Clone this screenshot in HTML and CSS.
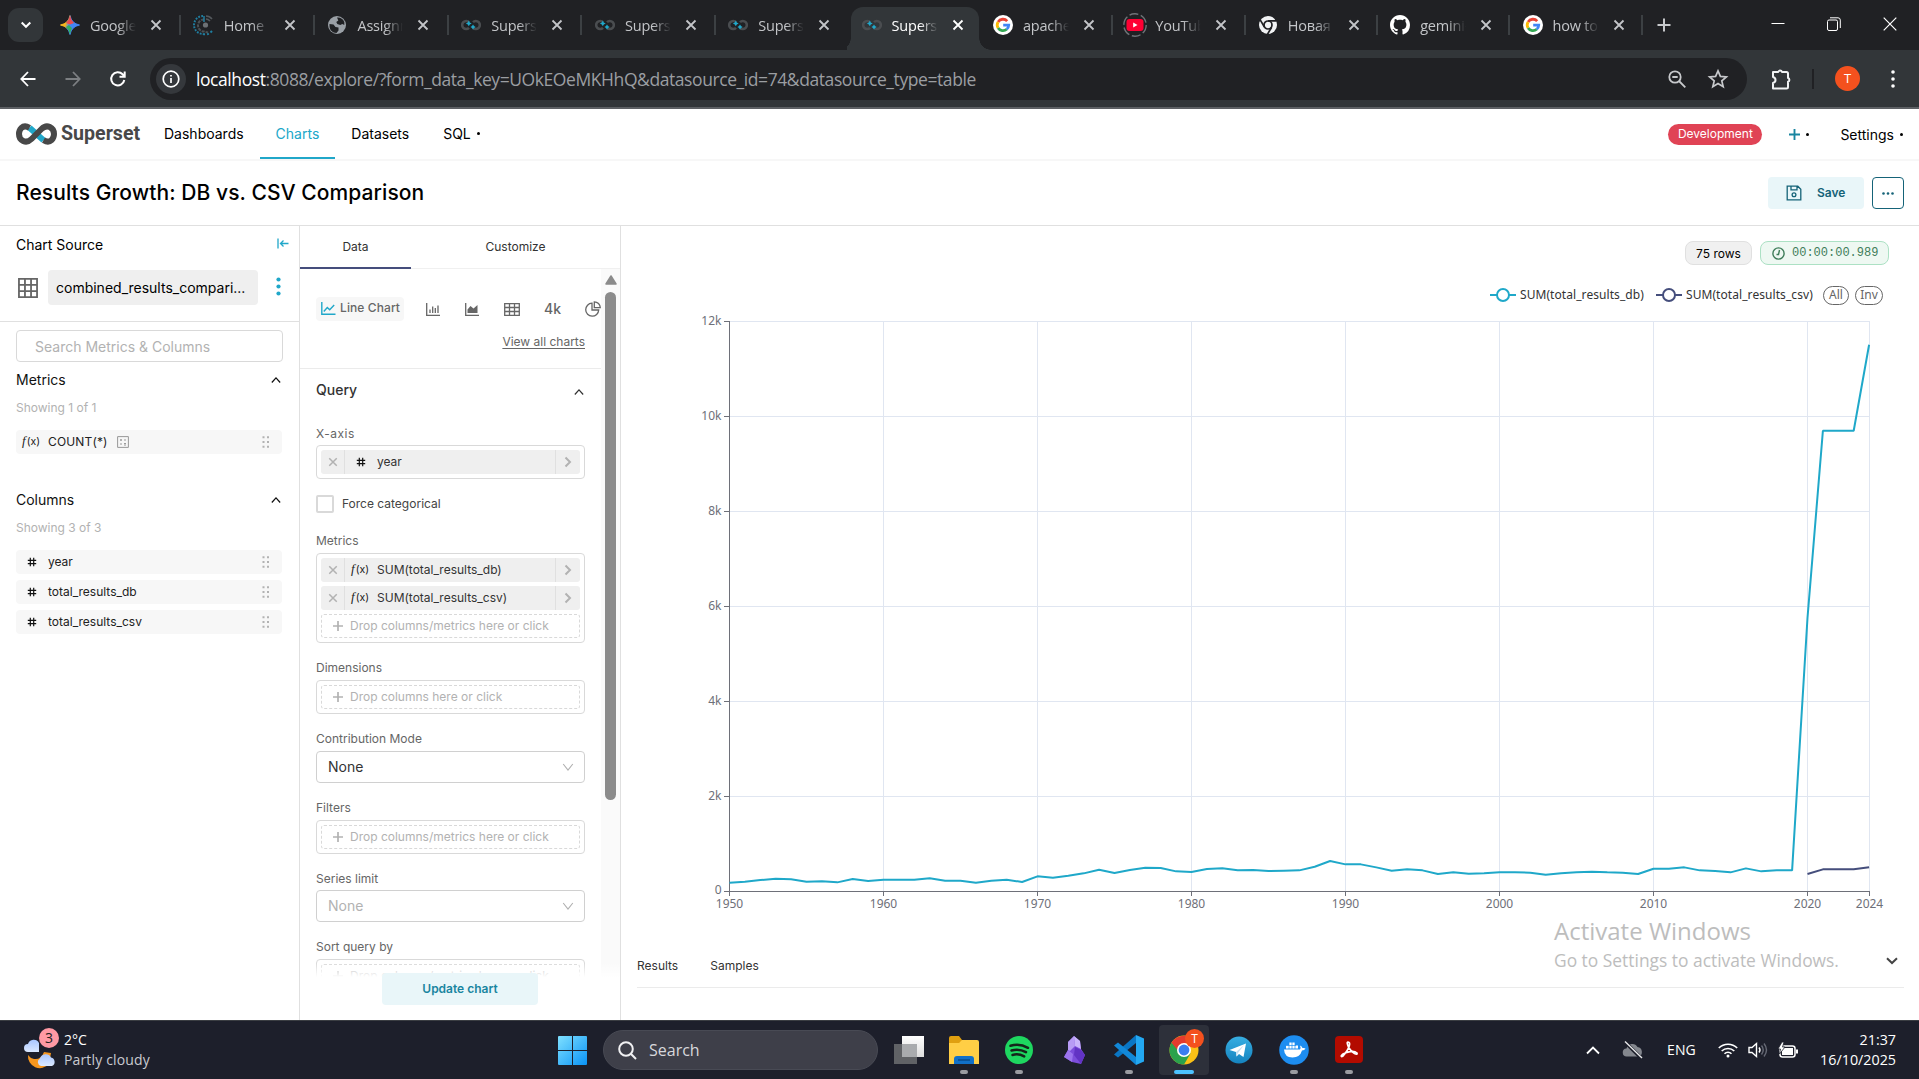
FILE: index.html
```html
<!DOCTYPE html>
<html lang="en">
<head>
<meta charset="utf-8">
<title>Results Growth: DB vs. CSV Comparison</title>
<link rel="stylesheet" href="styles.css">
</head>
<body>
<svg class="defs" width="0" height="0">
  <defs>
    <linearGradient id="gem" x1="0" x2="1" y1=".2" y2=".5"><stop stop-color="#f9b61b"/><stop offset=".3" stop-color="#f9b61b"/><stop offset=".5" stop-color="#4285f4"/><stop offset="1" stop-color="#4285f4"/></linearGradient>
    <symbol id="x" viewBox="0 0 12 12"><path d="M1.500 1.500l9 9M10.500 1.500l-9 9" fill="none" stroke="currentColor" stroke-width="1.800"/></symbol>
    <symbol id="superset-fav" viewBox="0 0 20 20"><path d="M8 7.200a4 4 0 1 0 0 5.600M12 7.200a4 4 0 1 1 0 5.600" fill="none" stroke="#4a4d50" stroke-width="2.600"/><path d="M7.800 5.500l1 1.900 1.900 1-1.900 1-1 1.900-1-1.900-1.900-1 1.900-1zM12 9.600l1 1.500 1.600 1-1.600 1-1 1.500-1-1.500-1.500-1 1.500-1z" fill="#20a7c9"/></symbol>
    <symbol id="google" viewBox="0 0 20 20"><circle cx="10" cy="10" r="10" fill="#fff"/><g fill="none" stroke-width="2.800"><path d="M14.200 6.100A5.700 5.700 0 0 0 5.100 7" stroke="#ea4335"/><path d="M5.100 7a5.700 5.700 0 0 0 0 6" stroke="#fbbc05"/><path d="M5.100 13a5.700 5.700 0 0 0 8.600 1.300" stroke="#34a853"/><path d="M13.700 14.300A5.700 5.700 0 0 0 15.700 10.200H10.200" stroke="#4285f4"/></g></symbol>
    <symbol id="up" viewBox="0 0 12 8"><path d="M1 7l5-5.500L11 7" fill="none" stroke="currentColor" stroke-width="1.500"/></symbol>
    <symbol id="down" viewBox="0 0 12 8"><path d="M1.200 1l4.800 6 4.800-6" fill="none" stroke="currentColor" stroke-width="1.100"/></symbol>
    <symbol id="right" viewBox="0 0 8 12"><path d="M1.500 1.500L6 6l-4.500 4.500" fill="none" stroke="currentColor" stroke-width="2"/></symbol>
    <symbol id="grip" viewBox="0 0 8 12"><path d="M.5.300h2v2h-2zM5 .300h2v2H5zM.5 5h2v2h-2zM5 5h2v2H5zM.5 9.700h2v2h-2zM5 9.700h2v2H5z" fill="#b2b2b2"/></symbol>
    <symbol id="hash" viewBox="0 0 10 10"><path d="M3.300.800v8.400M6.700.800v8.400M.8 3.300h8.400M.8 6.700h8.400" fill="none" stroke="#111" stroke-width="1.200"/></symbol>
    <symbol id="plus" viewBox="0 0 10 10"><path d="M5 0v10M0 5h10" fill="none" stroke="currentColor" stroke-width="1.700"/></symbol>
  </defs>
</svg>

<header class="browser">
  <div class="tabs">
    <button class="tab-menu"><svg width="12" height="8" viewBox="0 0 12 8"><path d="M1.700 1.500L6 5.800l4.300-4.300" fill="none" stroke="#fff" stroke-width="2"/></svg></button>
    <div class="tab wide"><svg class="fav" viewBox="0 0 20 20"><path d="M10 .5Q11.500 8.500 19.500 10 11.500 11.500 10 19.500 8.500 11.500.5 10 8.500 8.500 10 .5z" fill="url(#gem)" stroke="url(#gem)"/><path d="M10 .5Q11 5.500 14 8l-4 1.500L6 8Q9 5.500 10 .5z" fill="#ea4b4f"/><path d="M10 19.500Q9 14.500 6 12l3-2 3 3q-1.300 2.500-2 6.500z" fill="#2fae60"/></svg><span>Google</span><svg class="close"><use href="#x"/></svg></div>
    <div class="tab wide"><svg class="fav" viewBox="0 0 20 20" fill="none"><path d="M9 1A9 9 0 0 0 9 19" stroke="#1f7ea0" stroke-width="2" stroke-dasharray="1.800 1.300"/><path d="M9 19q5 1.500 9-3" stroke="#1f7ea0" stroke-width="2" stroke-dasharray="2 2"/><path d="M12 1q3.500 0 6 3M12 4q2 0 4 2" stroke="#54585c" stroke-width="1.600"/><path d="M10 4.500A6 6 0 0 0 10 16.500l4 1" stroke="#4b5155" stroke-width="2" stroke-dasharray="3 1"/><path d="M10 1v6" stroke="#1f7ea0" stroke-width="1.500"/><circle cx="11.500" cy="10" r="2.600" fill="#6d7175"/></svg><span>Home |</span><svg class="close"><use href="#x"/></svg></div>
    <div class="tab wide"><svg class="fav" viewBox="0 0 20 20"><circle cx="10" cy="10" r="9" fill="#9aa0a6"/><path d="M2.500 9l4 .5 2 2.500 3 .500v3l-2 2.500c-4 0-7-3-7-7zM10 2.500c3-.5 6 1 7.300 4.500v3l-2-1-2 1-3-1-1-2 2-1.500z" fill="#202124"/></svg><span>Assignm</span><svg class="close"><use href="#x"/></svg></div>
    <div class="tab wide"><svg class="fav"><use href="#superset-fav"/></svg><span>Superset</span><svg class="close"><use href="#x"/></svg></div>
    <div class="tab wide"><svg class="fav"><use href="#superset-fav"/></svg><span>Superset</span><svg class="close"><use href="#x"/></svg></div>
    <div class="tab plain"><svg class="fav"><use href="#superset-fav"/></svg><span>Superset</span><svg class="close"><use href="#x"/></svg></div>
    <div class="tab active"><svg class="fav"><use href="#superset-fav"/></svg><span>Superset</span><svg class="close"><use href="#x"/></svg></div>
    <div class="tab"><svg class="fav"><use href="#google"/></svg><span>apache</span><svg class="close"><use href="#x"/></svg></div>
    <div class="tab"><svg class="fav big" viewBox="0 0 24 24"><circle cx="12" cy="12" r="11.200" fill="none" stroke="#6f7378" stroke-width="1.400" stroke-dasharray="9 2.700"/><rect x="3.500" y="6" width="17" height="12" rx="3" fill="#ff0033"/><path d="M10.200 9.500v5l4.300-2.500z" fill="#fff"/></svg><span>YouTube</span><svg class="close"><use href="#x"/></svg></div>
    <div class="tab"><svg class="fav" viewBox="0 0 20 20"><circle cx="10" cy="10" r="9" fill="#f1f3f4"/><circle cx="10" cy="10" r="4" fill="#f1f3f4" stroke="#202124" stroke-width="1.700"/><path d="M10 5.800h8.500M6.400 12L2.200 4.900M13.600 12.200L9.400 19.400" stroke="#202124" stroke-width="1.700"/></svg><span>Новая</span><svg class="close"><use href="#x"/></svg></div>
    <div class="tab"><svg class="fav" viewBox="0 0 16 16"><path fill="#fff" d="M8 0C3.580 0 0 3.580 0 8c0 3.540 2.290 6.530 5.470 7.590.4.070.55-.17.55-.38 0-.19-.01-.82-.01-1.490-2.010.37-2.530-.49-2.690-.94-.09-.23-.48-.94-.82-1.130-.28-.15-.68-.52-.01-.53.63-.01 1.080.58 1.230.82.72 1.210 1.870.87 2.330.66.07-.52.28-.87.510-1.070-1.780-.2-3.640-.89-3.640-3.950 0-.87.310-1.590.82-2.150-.08-.2-.36-1.020.08-2.120 0 0 .67-.21 2.200.82.640-.18 1.320-.27 2-.27s1.360.090 2 .27c1.530-1.040 2.200-.82 2.200-.82.440 1.100.16 1.920.08 2.120.51.56.82 1.270.82 2.150 0 3.070-1.870 3.750-3.650 3.950.29.25.54.73.54 1.480 0 1.070-.01 1.930-.01 2.200 0 .21.150.46.550.38A8.010 8.010 0 0 0 16 8c0-4.420-3.580-8-8-8z"/></svg><span>gemini-</span><svg class="close"><use href="#x"/></svg></div>
    <div class="tab"><svg class="fav"><use href="#google"/></svg><span>how to</span><svg class="close"><use href="#x"/></svg></div>
    <svg class="new-tab" width="14" height="14" viewBox="0 0 14 14"><path d="M7 .5v13M.5 7h13" stroke="#c7c9cc" stroke-width="2"/></svg>
    <div class="window-controls">
      <svg width="14" height="14" viewBox="0 0 14 14"><path d="M.5 6.500h13" stroke="#fff"/></svg>
      <svg width="14" height="14" viewBox="0 0 14 14" fill="none" stroke="#fff"><rect x=".5" y="3" width="10" height="10.500" rx="1.500"/><path d="M3 .800h8a2.300 2.300 0 0 1 2.300 2.300V11" /></svg>
      <svg width="14" height="14" viewBox="0 0 14 14"><path d="M.7.700l12.600 12.600M13.300.700L.7 13.300" stroke="#fff" stroke-width="1.200"/></svg>
    </div>
  </div>
  <div class="toolbar">
    <div class="nav-buttons">
      <svg width="16" height="16" viewBox="0 0 16 16" stroke="#fff"><path d="M15.500 8H1.500M8 1L1.300 8 8 15" fill="none" stroke-width="1.800"/></svg>
      <svg width="16" height="16" viewBox="0 0 16 16" stroke="#7c7f82"><path d="M.5 8h14M8 1l6.700 7L8 15" fill="none" stroke-width="1.800"/></svg>
      <svg width="16" height="16" viewBox="0 0 16 16" stroke="#fff"><path d="M14.300 9A6.600 6.600 0 1 1 12.600 3.300L14.500 5.200M14.700.500v5.300H9.500" fill="none" stroke-width="2"/></svg>
    </div>
    <div class="omnibox">
      <i class="info"><svg width="18" height="18" viewBox="0 0 18 18"><circle cx="9" cy="9" r="7.800" fill="none" stroke="#fff" stroke-width="1.700"/><path d="M9 8v5M9 5v1.600" stroke="#fff" stroke-width="1.700"/></svg></i>
      <span class="url"><b>localhost</b>:8088/explore/?form_data_key=UOkEOeMKHhQ&amp;datasource_id=74&amp;datasource_type=table</span>
      <svg class="zoom" width="18" height="18" viewBox="0 0 18 18" fill="none" stroke="#c7c9cc" stroke-width="1.800"><circle cx="7" cy="7" r="5.700"/><path d="M11 11l6.300 6.300M4.300 7h5.400"/></svg>
      <svg class="star" width="20" height="20" viewBox="0 0 20 20" fill="none" stroke="#c7c9cc" stroke-width="1.700"><path d="M10 1.800l2.400 5.600 6 .5-4.600 4 1.400 5.900L10 14.600l-5.200 3.200 1.400-5.900-4.600-4 6-.5z"/></svg>
    </div>
    <svg class="puzzle" width="22" height="22" viewBox="0 0 22 22"><path d="M3 4h5.200a2 2 0 0 1 3.800 0h4.500q1.500 0 1.500 1.500V10a2 2 0 0 1 0 3.800V19q0 1.500-1.500 1.500H3V15q2.500-.7 2.500-3T3 9z" fill="none" stroke="#f1f3f4" stroke-width="2" stroke-linejoin="round"/></svg>
    <i class="bar-sep"></i>
    <span class="avatar">T</span>
    <svg class="kebab" width="4" height="18" viewBox="0 0 4 18" fill="#fff"><circle cx="2" cy="2" r="1.800"/><circle cx="2" cy="9" r="1.800"/><circle cx="2" cy="16" r="1.800"/></svg>
  </div>
</header>

<nav class="topnav">
  <a class="logo"><svg width="41" height="22" viewBox="0 0 41 22" fill="none" stroke-width="6"><path d="M13.500 4.700L27.500 17.300" stroke="#20a7c9"/><path d="M13.500 4.800C6 .500 3 7.500 3 11c0 6.500 7 10.500 12.500 5L25.500 6C31 .500 38 4.500 38 11c0 3.500-3 10.500-10.500 6.200" stroke="#484848"/></svg><b>Superset</b></a>
  <a>Dashboards</a><a class="on">Charts</a><a>Datasets</a><a class="sql">SQL<i></i></a>
  <div class="nav-right"><span class="env">Development</span><svg class="add" width="11" height="11"><use href="#plus"/></svg><i></i><span class="settings">Settings</span><i></i></div>
</nav>

<section class="titlebar">
  <h1>Results Growth: DB vs. CSV Comparison</h1>
  <button class="save"><svg width="16" height="16" viewBox="0 0 16 16" fill="none" stroke="#156378" stroke-width="1.300"><path d="M1.200 1.200h10.600l3 3v10.600H1.200zM5 1.500v3.300h6V1.500"/><circle cx="8" cy="9.700" r="1.900"/></svg>Save</button>
  <button class="more"><svg width="12" height="3" viewBox="0 0 12 3" fill="#156378"><circle cx="1.500" cy="1.500" r="1.300"/><circle cx="6" cy="1.500" r="1.300"/><circle cx="10.500" cy="1.500" r="1.300"/></svg></button>
</section>

<main class="explore">
  <aside class="source">
    <div class="source-head"><span>Chart Source</span><svg width="12" height="12" viewBox="0 0 12 12" fill="none" stroke="#20a7c9" stroke-width="1.300"><path d="M1 .500v10M3.500 5.500H11.500M6.500 2.500l-3 3 3 3"/></svg></div>
    <div class="dataset">
      <svg width="20" height="20" viewBox="0 0 21 21" fill="none" stroke="#666" stroke-width="1.900"><path d="M1 1h19v19H1zM1 7.300h19M1 13.700h19M7.300 1v19M13.700 1v19"/></svg>
      <span>combined_results_compari...</span>
      <svg width="5" height="19" viewBox="0 0 5 19" fill="#20a7c9"><circle cx="2.500" cy="2.500" r="2.100"/><circle cx="2.500" cy="9.500" r="2.100"/><circle cx="2.500" cy="16.500" r="2.100"/></svg>
    </div>
    <div class="search">Search Metrics &amp; Columns</div>
    <div class="group-head">Metrics<svg><use href="#up"/></svg></div>
    <p class="showing">Showing 1 of 1</p>
    <div class="field"><em class="fx"><i>f</i>(x)</em><span class="wide-text">COUNT(*)</span><svg class="cert" width="12" height="12" viewBox="0 0 12 12" fill="none" stroke="#999"><path d="M.6.600h10.800v10.800H.6z"/><path d="M3 4h2M4 3v2M7 4h2M3 8h2M7 7.500h2M7 9h2" /></svg><svg class="grip"><use href="#grip"/></svg></div>
    <div class="group-head second">Columns<svg><use href="#up"/></svg></div>
    <p class="showing">Showing 3 of 3</p>
    <div class="field"><svg class="hash"><use href="#hash"/></svg><span>year</span><svg class="grip"><use href="#grip"/></svg></div>
    <div class="field"><svg class="hash"><use href="#hash"/></svg><span>total_results_db</span><svg class="grip"><use href="#grip"/></svg></div>
    <div class="field"><svg class="hash"><use href="#hash"/></svg><span>total_results_csv</span><svg class="grip"><use href="#grip"/></svg></div>
  </aside>

  <section class="controls">
    <div class="ctabs"><span class="on">Data</span><span>Customize</span></div>
    <div class="cbody">
      <div class="cscroll">
        <div class="viz">
          <div class="viz-row">
            <span class="current"><svg width="15" height="13" viewBox="0 0 15 13" fill="none" stroke="#20a7c9" stroke-width="1.400"><path d="M.8 0v12.200H14.500M2.800 9.500l3.500-4 2.400 2.200L13.200 3"/></svg>Line Chart</span>
            <svg width="14" height="13" viewBox="0 0 14 13" fill="none" stroke="#666" stroke-width="1.300"><path d="M.7 0v12.300H14M4 10V6.500M6.700 10V3.500M9.300 10V5M12 10V2.500"/></svg>
            <svg width="14" height="13" viewBox="0 0 14 13"><path d="M.7 0v12.300H14" fill="none" stroke="#666" stroke-width="1.300"/><path d="M2.500 10V6.500L5.500 3l3 2.500L12.500 2v8z" fill="#666"/></svg>
            <svg width="16" height="13" viewBox="0 0 16 13" fill="none" stroke="#666" stroke-width="1.300"><path d="M.7.700h14.600v11.600H.7zM.7 4.500h14.600M.7 8.500h14.600M5.500.700v11.600M10.500.700v11.600"/></svg>
            <b>4k</b>
            <svg class="pie" width="16" height="16" viewBox="0 0 16 16" fill="none" stroke="#666" stroke-width="1.300"><path d="M7 2.200A6.500 6.500 0 1 0 13.700 9H7z"/><path d="M9.300.800V6.700h6A6 6 0 0 0 9.300.800z"/></svg>
          </div>
          <a>View all charts</a>
        </div>
        <div class="query-head">Query<svg><use href="#up"/></svg></div>
        <label class="tight xaxis">X-axis</label>
        <div class="box"><div class="pill"><svg class="rm"><use href="#x"/></svg><svg class="hash"><use href="#hash"/></svg><span>year</span><svg class="go"><use href="#right"/></svg></div></div>
        <div class="check"><i></i>Force categorical</div>
        <label>Metrics</label>
        <div class="box">
          <div class="pill"><svg class="rm"><use href="#x"/></svg><em class="fx"><i>f</i>(x)</em><span>SUM(total_results_db)</span><svg class="go"><use href="#right"/></svg></div>
          <div class="pill"><svg class="rm"><use href="#x"/></svg><em class="fx"><i>f</i>(x)</em><span>SUM(total_results_csv)</span><svg class="go"><use href="#right"/></svg></div>
          <div class="drop"><svg><use href="#plus"/></svg>Drop columns/metrics here or click</div>
        </div>
        <label>Dimensions</label>
        <div class="box"><div class="drop"><svg><use href="#plus"/></svg>Drop columns here or click</div></div>
        <label>Contribution Mode</label>
        <div class="select">None<svg><use href="#down"/></svg></div>
        <label>Filters</label>
        <div class="box"><div class="drop"><svg><use href="#plus"/></svg>Drop columns/metrics here or click</div></div>
        <label class="tight">Series limit</label>
        <div class="select empty">None<svg><use href="#down"/></svg></div>
        <label>Sort query by</label>
        <div class="box"><div class="drop"><svg><use href="#plus"/></svg>Drop columns/metrics here or click</div></div>
      </div>
      <div class="scrollbar"><svg width="12" height="10" viewBox="0 0 12 10"><path d="M6 1l5 8H1z" fill="#8b8b8b" stroke="#8b8b8b" stroke-width="1.500" stroke-linejoin="round"/></svg><i></i></div>
    </div>
    <div class="update"><button>Update chart</button></div>
  </section>

  <section class="chart">
    <div class="stats"><span class="rows">75 rows</span><span class="timer"><svg width="13" height="13" viewBox="0 0 13 13" fill="none" stroke="#3f7d5a" stroke-width="1.400"><circle cx="6.500" cy="6.500" r="5.600"/><path d="M7.500 3L6.500 7.500 4.500 7.500"/></svg>00:00:00.989</span></div>
    <div class="legend">
      <svg width="26" height="14" viewBox="0 0 26 14" stroke="#1fa8c9" stroke-width="2"><path d="M0 7h26"/><circle cx="13" cy="7" r="6" fill="#fff"/></svg><span class="l1">SUM(total_results_db)</span>
      <svg width="26" height="14" viewBox="0 0 26 14" stroke="#454e7c" stroke-width="2"><path d="M0 7h26"/><circle cx="13" cy="7" r="6" fill="#fff"/></svg><span class="l2">SUM(total_results_csv)</span>
      <b>All</b><b class="inv">Inv</b>
    </div>
    <svg class="plot" width="1298" height="620" viewBox="0 0 1298 620">
      <path class="grid" d="M109 10.500h1139M109 105.500h1139M109 200.500h1139M109 295.500h1139M109 390.500h1139M109 485.500h1139M262.500 10v570M416.500 10v570M570.500 10v570M724.500 10v570M878.500 10v570M1032.500 10v570M1186.500 10v570M1248.500 10v570"/>
      <path class="axis" d="M108.500 10v575M103 580.500h1145.500M103 10.500h5M103 105.500h5M103 200.500h5M103 295.500h5M103 390.500h5M103 485.500h5M262.500 580v5M416.500 580v5M570.500 580v5M724.500 580v5M878.500 580v5M1032.500 580v5M1186.500 580v5M1248.500 580v5"/>
      <g class="ylab"><text x="100.500" y="13.500">12k</text><text x="100.500" y="108.500">10k</text><text x="100.500" y="203.500">8k</text><text x="100.500" y="298.500">6k</text><text x="100.500" y="393.500">4k</text><text x="100.500" y="488.500">2k</text><text x="100.500" y="583">0</text></g>
      <g class="xlab"><text x="108.500" y="597">1950</text><text x="262.500" y="597">1960</text><text x="416.500" y="597">1970</text><text x="570.500" y="597">1980</text><text x="724.500" y="597">1990</text><text x="878.500" y="597">2000</text><text x="1032.500" y="597">2010</text><text x="1186.500" y="597">2020</text><text x="1248.500" y="597">2024</text></g>
      <g transform="translate(108.500 508.700) scale(15.400 .3333)">
        <polyline class="series db" points="0,189 1,186 2,181 3,177 4,179 5,186 6,185 7,188 8,178 9,184 10,180 11,180 12,180 13,176 14,183 15,183 16,189 17,183 18,180 19,187 20,170 21,174 22,168 23,161 24,150 25,160 26,151 27,144 28,145 29,155 30,157 31,148 32,146 33,152 34,151 35,154 36,153 37,152 38,141 39,124 40,134 41,134 42,143 43,153 44,149 45,152 46,163 47,158 48,162 49,161 50,158 51,158 52,159 53,165 54,161 55,158 56,156 57,158 58,159 59,163 60,147 61,147 62,143 63,152 64,154 65,158 66,146 67,155 68,152 69,152 70,-606 71,-1167 72,-1167 73,-1167 74,-1425"/>
        <polyline class="series csv" points="70,163 71,149 72,149 73,149 74,143"/>
      </g>
    </svg>
    <div class="results"><span>Results</span><span>Samples</span><svg width="12" height="8" viewBox="0 0 12 8"><path d="M1 1.200l5 4.800 5-4.800" fill="none" stroke="#444" stroke-width="2"/></svg></div>
  </section>
</main>

<div class="watermark"><p>Activate Windows</p><small>Go to Settings to activate Windows.</small></div>

<footer class="taskbar">
  <div class="weather">
    <div class="wicon"><svg width="32" height="36" viewBox="0 0 32 36"><defs><linearGradient id="cl" x2="0" y2="1"><stop stop-color="#a9c6ff"/><stop offset="1" stop-color="#dbe8ff"/></linearGradient></defs><path d="M4 20a12 12 0 0 0 21 9l2-11-7-1q-3 8-10 7-4-1-6-4z" fill="#f6961e"/><path d="M4 17a4 4 0 0 1 0-8 6 6 0 0 1 11-1v9z" fill="url(#cl)"/><path d="M17 31a4 4 0 0 1-1-7.500 6 6 0 0 1 11-1 4.500 4.500 0 0 1 1 8.500z" fill="url(#cl)"/></svg><b>3</b></div>
    <div class="wtext"><span>2°C</span><small>Partly cloudy</small></div>
  </div>
  <svg class="start" width="29" height="29" viewBox="0 0 29 29"><defs><linearGradient id="w" x2="1" y2="1"><stop stop-color="#7fe0ff"/><stop offset="1" stop-color="#0a93f5"/></linearGradient></defs><path d="M1 0h13v14H0V1q0-1 1-1zM15 0h13q1 0 1 1v13H15zM0 15h14v14H1q-1 0-1-1zM15 15h14v13q0 1-1 1H15z" fill="url(#w)"/></svg>
  <div class="tsearch"><svg width="19" height="19" viewBox="0 0 19 19" fill="none" stroke="#f1f1f3" stroke-width="2"><circle cx="8" cy="8" r="6.800"/><path d="M12.800 12.800L18 18"/></svg>Search</div>
  <div class="apps">
    <div><svg viewBox="0 0 30 30"><defs><linearGradient id="tv" x2="0" y2="1"><stop stop-color="#fff"/><stop offset="1" stop-color="#ddd"/></linearGradient></defs><path d="M8 1h22v21H8z" fill="url(#tv)"/><path d="M0 9h23v20H0z" fill="#606266"/><path d="M8 9h15v13H8z" fill="#a9abae"/></svg></div>
    <div class="run"><svg viewBox="0 0 30 30"><path d="M0 3q0-2 2-2h8l3 4v5H0z" fill="#e0a010"/><path d="M0 8l10 0 3-3h15q2 0 2 2v22H0z" fill="#ffce45"/><path d="M5 29v-5q0-3 3-3h14q3 0 3 3v5z" fill="#1170c8"/><path d="M9 25h12" stroke="#074b8c" stroke-width="1.500"/></svg></div>
    <div class="run"><svg viewBox="0 0 30 30"><circle cx="15" cy="15" r="14" fill="#1ed760"/><path d="M6.500 10.800q9-2.800 17.500 2M7.500 15.500q7.500-2.300 14.500 1.700M8.500 20q6-1.800 11.700 1.400" fill="none" stroke="#15251b" stroke-width="2.500" stroke-linecap="round"/></svg></div>
    <div><svg viewBox="0 0 30 30"><path d="M15 1l6 5 1 8 4 6-4 9-9-2-8-5 4-7V7z" fill="#7c4ddb"/><path d="M15 1l1 10-5 5-2-1V7z" fill="#b79bf5"/><path d="M9 15l5 4-1 8-8-5z" fill="#9c74ee"/><path d="M15 1l6 5 1 8-6-3z" fill="#c9b4fb"/><path d="M16 12l6 3 4 5-4 9-7-9z" fill="#6233c4"/></svg></div>
    <div class="run"><svg viewBox="0 0 30 30"><path d="M22 0l8 3.500v23L22 30z" fill="#23a8f2"/><path d="M22 0v8L4 22.500 0 19.500z" fill="#0a76c4"/><path d="M22 30v-8L4 7.500 0 10.500z" fill="#1288d8"/></svg></div>
    <div class="run focus"><svg viewBox="0 0 30 30"><circle cx="15" cy="15" r="14.500" fill="#fbc116"/><path d="M15 15L2.500 7.700A14.500 14.500 0 0 0 15 29.500l6.500-11z" fill="#2ba24c"/><path d="M15 15H8.500L2.500 7.700A14.500 14.500 0 0 1 27.500 8.200H15z" fill="#e33b2e"/><circle cx="15" cy="15" r="7" fill="#fff"/><circle cx="15" cy="15" r="5.400" fill="#3a7ef0"/></svg><b>T</b></div>
    <div><svg viewBox="0 0 30 30"><defs><linearGradient id="tg" x2="0" y2="1"><stop stop-color="#37aee2"/><stop offset="1" stop-color="#1583bf"/></linearGradient></defs><circle cx="15" cy="15" r="13.500" fill="url(#tg)"/><path d="M5.500 15l16.500-6.500-2.500 13.500-4.500-3-2.500 2.500-.5-4.500z" fill="#fff"/><path d="M12 17l8-7-6 8-1.500 3.500z" fill="#c5dff0"/></svg></div>
    <div class="run"><svg viewBox="0 0 30 30"><circle cx="15" cy="15" r="14.800" fill="#1d8df0"/><path d="M5 14.500h16q1-2 0-4 2 .5 2.500 2.500 2-.4 3 .5-1 2-3.500 2-2 7-9.500 7-8 0-8.500-8z" fill="#fff"/><path d="M7 10.500h12v3H7zM10 7.500h6v3h-6z" fill="#fff"/><path d="M10 7v7M13 7v7M16 7v7M7 10.500h10" stroke="#1d8df0" stroke-width=".7"/></svg></div>
    <div class="run"><svg viewBox="0 0 30 30"><rect x="1" y="1" width="28" height="27" rx="4" fill="#b30b00"/><path d="M14 7c3 0 2 6-5 14-3 2-2-2 2-3 5-2 10-2 12 0 1 3-5 0-8-5-1.500-3-2.500-6-1-6z" fill="none" stroke="#fff" stroke-width="1.700"/></svg></div>
  </div>
  <div class="tray">
    <svg class="t-up" width="14" height="9" viewBox="0 0 14 9"><path d="M1 7.500l6-6 6 6" fill="none" stroke="#fff" stroke-width="1.800"/></svg>
    <svg class="t-cloud" width="20" height="18" viewBox="0 0 20 18"><path d="M4 15.500a4 4 0 0 1-.5-8 6 6 0 0 1 11-1.500 5 5 0 0 1 1.500 9.500z" fill="#84878e"/><path d="M2 1l16 16" stroke="#1d1f2b" stroke-width="3.500"/><path d="M2 .500l17 16.500" stroke="#e8e8ea" stroke-width="1.400"/></svg>
    <span class="lang">ENG</span>
    <svg class="t-wifi" width="20" height="16" viewBox="0 0 20 16" fill="none" stroke="#fff" stroke-width="1.600"><path d="M.8 6a13 13 0 0 1 18.400 0M3.700 9a9 9 0 0 1 12.600 0M6.500 11.800a5 5 0 0 1 7 0"/><circle cx="10" cy="14" r="1.500" fill="#fff" stroke="none"/></svg>
    <svg class="t-vol" width="21" height="16" viewBox="0 0 21 16" fill="none" stroke="#fff" stroke-width="1.400"><path d="M1 5.500h3L8.500 1.500v13L4 10.500H1z"/><path d="M11 5.500q2 2.500 0 5"/><path d="M13.500 3.500q3.500 4.500 0 9M16 1.500q5 6.500 0 13" stroke="#666975"/></svg>
    <svg class="t-bat" width="21" height="17" viewBox="0 0 21 17"><rect x="2" y="4" width="15" height="11" rx="2.500" fill="none" stroke="#fff" stroke-width="1.500"/><rect x="4" y="6" width="11" height="7" fill="#fff"/><path d="M18 7.500v4h2V7.500z" fill="#fff"/><path d="M4 0L0 7h2.500l-1 5L7 5H4.500L6 0z" fill="#fff" stroke="#1d1f2b" stroke-width=".8"/></svg>
    <div class="clock"><span>21:37</span><span>16/10/2025</span></div>
  </div>
</footer>
</body>
</html>
```
FILE: styles.css
```css
* { box-sizing: border-box; }
body { margin: 0; width: 1919px; height: 1079px; overflow: hidden; display: flex; flex-direction: column; position: relative; background: #fff; color: #000; font: 12px/18px Inter, "Liberation Sans", sans-serif; }
svg { display: block; flex: none; overflow: visible; }
.defs { position: absolute; }
button { border: 0; padding: 0; font: inherit; }
p, h1 { margin: 0; }

/* browser chrome */
.browser { flex: none; height: 109px; border-bottom: 2px solid #5d6064; background: #323639; font-family: "Open Sans", "Noto Sans", sans-serif; }
.tabs { height: 50px; background: #202124; display: flex; align-items: center; }
.tab-menu { flex: none; width: 35px; height: 34px; margin: 0 3.250px 0 8px; border-radius: 11px; background: #323639; display: flex; align-items: center; justify-content: center; }
.tab { position: relative; flex: none; width: 132.400px; height: 50px; display: flex; align-items: center; padding-left: 13.200px; color: #c3c5c8; font-size: 14.500px; }
.tab.wide { width: 133.750px; padding-left: 13.700px; }
.tab::after { content: ""; position: absolute; right: -1px; top: 15px; width: 2px; height: 20px; background: #3c4043; }
.tab.plain::after, .tab.active::after { display: none; }
.tab .fav { width: 20px; height: 20px; margin-right: 10px; }
.tab .fav.big { width: 24px; height: 24px; margin: 0 8px 0 -2px; }
.tab span { width: 46px; overflow: hidden; white-space: nowrap; letter-spacing: -.2px; line-height: 22px; margin-top: 1px; -webkit-mask-image: linear-gradient(90deg, #000 60%, transparent); mask-image: linear-gradient(90deg, #000 60%, transparent); }
.tab .close { width: 12px; height: 12px; margin-left: 14px; }
.tab.active { color: #fff; z-index: 0; background: radial-gradient(circle at 0 0, transparent 11.500px, #323639 12px) left -8px bottom 0 / 12px 12px no-repeat; }
.tab.active::before { content: ""; position: absolute; z-index: -1; left: 4px; right: 1px; top: 7px; bottom: 0; background: #323639; border-radius: 12px 12px 0 0; }
.tab.active::after { display: block; right: -11px; top: auto; bottom: 0; width: 12px; height: 12px; background: radial-gradient(circle at 100% 0, transparent 11.500px, #323639 12px); }
.tab.active .fav { margin-left: 1px; }
.new-tab { margin-left: 15px; }
.window-controls { display: flex; gap: 42px; margin: -2px 22px 0 auto; }
.toolbar { height: 57px; display: flex; align-items: center; }
.nav-buttons { display: flex; gap: 29px; width: 150px; padding-left: 20px; }
.omnibox { width: 1597px; height: 42px; border-radius: 21px; background: #202124; display: flex; align-items: center; padding-left: 6px; }
.info { width: 30px; height: 30px; border-radius: 50%; background: #35383c; display: flex; align-items: center; justify-content: center; }
.url { margin-left: 10px; width: 1472px; color: #9b9ea2; font-size: 17.500px; line-height: 26px; letter-spacing: -.42px; white-space: nowrap; }
.url b { font-weight: 400; color: #fff; }
.star { margin-left: 22px; }
.puzzle { margin-left: 23px; }
.bar-sep { width: 2px; height: 20px; margin-left: 20px; background: #202124; }
.avatar { width: 25px; height: 25px; margin-left: 21px; border-radius: 50%; background: #f4511e; color: #fff; font-size: 13px; line-height: 25px; text-align: center; }
.kebab { margin-left: 31px; }

/* application navigation */
.topnav { flex: none; height: 52px; border-bottom: 2px solid #f7f7f7; display: flex; font-size: 14px; line-height: 50px; }
.topnav a { padding: 0 16px; }
.topnav .logo { display: flex; align-items: center; width: 148px; padding: 0 0 0 16px; color: #484848; font-family: Roboto, sans-serif; }
.logo b { margin-left: 4px; font-size: 19.600px; line-height: 24px; }
.topnav .on { color: #20a7c9; box-shadow: inset 0 -2px #20a7c9; }
.topnav .sql { padding-left: 18px; }
.topnav a i, .nav-right i { display: inline-block; width: 3px; height: 3px; border-radius: 50%; background: #000; margin-left: 6px; vertical-align: 4px; }
.nav-right { display: flex; align-items: center; margin-left: auto; padding-right: 16px; }
.env { width: 94px; height: 21px; margin-right: 27px; border-radius: 11px; background: #e04355; color: #fff; font-size: 12px; line-height: 20px; text-align: center; }
.add { color: #1985a0; margin-top: 1px; }
.nav-right .add + i { margin-left: 6px; }
.settings { margin: 2px 0 0 31px; }
.titlebar { flex: none; height: 65px; padding: 0 15px 0 16px; border-bottom: 1px solid #e0e0e0; display: flex; align-items: center; }
h1 { flex: 1; font-size: 21px; font-weight: 500; letter-spacing: .08px; line-height: 28px; color: #000; }
.save { width: 96px; height: 32px; border-radius: 4px; background: #e9f6f9; color: #156378; font-weight: 600; display: flex; align-items: center; padding-left: 18px; gap: 15px; }
.more { width: 32px; height: 32px; margin-left: 8px; border: 1px solid #156378; border-radius: 4px; background: #fff; display: flex; align-items: center; justify-content: center; }

.explore { flex: none; height: 794px; display: flex; }

/* dataset panel */
.source { width: 300px; border-right: 1px solid #e0e0e0; }
.source-head { display: flex; justify-content: space-between; align-items: center; height: 37px; padding: 0 10px 0 16px; font-size: 14px; }
.source-head svg { margin-top: -2px; }
.dataset { height: 59px; border-bottom: 1px solid #e0e0e0; display: flex; align-items: flex-start; padding: 7px 18px 0 18px; }
.dataset svg { margin-top: 8px; }
.dataset svg:last-child { margin-left: 18px; margin-top: 7px; }
.dataset span { width: 211px; height: 35px; margin: 0 0 0 10px; padding-left: 8px; border-radius: 4px; background: #efefef; font-size: 14px; line-height: 36px; white-space: nowrap; }
.search { width: 267px; height: 32px; margin: 8px 0 0 16px; padding-left: 18px; border: 1px solid #d9d9d9; border-radius: 4px; color: #b2b2b2; font-size: 14px; line-height: 31px; }
.group-head { display: flex; justify-content: space-between; align-items: center; height: 36px; padding: 0 18px 0 16px; font-size: 14px; color: #111; }
.group-head svg { width: 10px; height: 8px; }
.group-head.second { margin-top: 28px; }
.showing { height: 20px; margin: 0 0 12px 16px; color: #b2b2b2; line-height: 20px; }
.field { width: 266px; height: 24px; margin: 0 0 6px 16px; border-radius: 4px; background: #f7f7f7; display: flex; align-items: center; color: #222; }
.field span { flex: none; white-space: nowrap; }
.field .wide-text { letter-spacing: .15px; }
.fx { width: 26px; margin-left: 6px; font: 10.500px/18px Inter, sans-serif; color: #222; }
.fx i { font: italic 13px/14px "Liberation Serif", serif; margin-right: 1px; }
.hash { width: 10px; height: 10px; margin: 0 11px 0 11px; }
.cert { margin-left: 9px; }
.field .grip { width: 8px; height: 12px; margin: 0 12px 0 auto; }

/* control panel */
.controls { position: relative; width: 321px; border-right: 1px solid #e0e0e0; overflow: hidden; color: #333; }
.ctabs { display: flex; height: 43px; border-bottom: 1px solid #f0f0f0; line-height: 42px; text-align: center; }
.ctabs span { width: 209px; }
.ctabs .on { width: 111px; height: 43px; border-bottom: 2px solid #454e7c; }
.cbody { display: flex; height: 751px; overflow: hidden; }
.cscroll { width: 301px; overflow: hidden; }
.viz { height: 100px; padding: 28px 0 0 16px; border-bottom: 1px solid #ebebeb; overflow: hidden; }
.viz-row { display: flex; align-items: center; color: #666; }
.viz-row > svg { margin-left: 25px; }
.current { width: 88px; height: 24px; padding-left: 5px; border-radius: 4px; background: #f7f7f7; display: flex; gap: 4px; font-weight: 500; letter-spacing: .1px; line-height: 22px; white-space: nowrap; margin-right: -3px; }
.current + svg { margin-left: 25px; }
.current svg { margin-top: 5px; }
.viz-row b { margin-left: 24px; font-weight: 500; font-size: 14px; }
.viz-row .pie { margin-left: 24px; }
.viz a { display: block; width: 269px; margin-top: 12px; text-align: right; color: #666; text-decoration: underline; text-underline-offset: 2px; }
.query-head { display: flex; align-items: center; justify-content: space-between; height: 20px; margin: 11px 16px 25px; font-size: 14px; font-weight: 500; color: #333; }
.query-head svg { width: 10px; height: 8px; margin-top: 3px; margin-right: 1px; }
.controls label { display: block; height: 18px; margin: 16px 0 3px 16px; color: #666; }
.controls label.tight { margin-bottom: 2px; }
.controls label.xaxis { margin-top: 0; letter-spacing: .5px; }
.box { width: 269px; margin-left: 16px; padding: 4px; border: 1px solid #d9d9d9; border-radius: 4px; display: flex; flex-direction: column; gap: 4px; }
.pill { height: 24px; border-radius: 3px; background: #efefef; display: flex; align-items: center; white-space: nowrap; }
.pill::before { content: ""; order: 1; width: 1px; height: 24px; background: #e0e0e0; }
.pill .rm { order: 0; width: 10px; height: 10px; margin: 0 6px 0 7px; color: #b2b2b2; stroke: currentColor; stroke-width: .6; }
.pill .hash, .pill .fx { order: 2; }
.pill .hash { margin: 0 11px; }
.pill .fx { width: 26px; margin-left: 6px; }
.pill span { order: 3; flex: 1; height: 24px; line-height: 24px; border-right: 1px solid #e0e0e0; }
.pill .go { order: 4; width: 8px; height: 12px; margin: 0 8px; color: #b2b2b2; }
.drop { height: 24px; border: 1px dashed #d9d9d9; border-radius: 3px; display: flex; align-items: center; gap: 7px; padding-left: 11px; color: #b2b2b2; line-height: 22px; white-space: nowrap; }
.drop svg { width: 10px; height: 10px; }
.check { display: flex; align-items: center; gap: 8px; height: 18px; margin: 16px 0 19px 16px; color: #444; }
.check i { width: 18px; height: 18px; border: 2px solid #d9d9d9; border-radius: 2px; }
.select { width: 269px; height: 32px; margin-left: 16px; padding: 0 10px 0 11px; border: 1px solid #d0d0d0; border-radius: 4px; display: flex; align-items: center; justify-content: space-between; font-size: 14px; }
.select svg { width: 12px; height: 8px; color: #b0b0b0; }
.select.empty { color: #b2b2b2; }
.scrollbar { width: 19px; padding: 6px 0 0 4px; background: #fafafa; }
.scrollbar i { display: block; width: 11px; height: 508px; margin-top: 7px; border-radius: 6px; background: #8b8b8b; }
.update { position: absolute; left: 0; right: 0; bottom: 0; height: 57px; padding: 10px 0 0 82px; background: linear-gradient(rgba(255,255,255,0), #fff 14px); }
.update button { width: 156px; height: 32px; border-radius: 4px; background: #e9f6f9; color: #1985a0; font-weight: 600; }

/* chart */
.chart { width: 1298px; display: flex; flex-direction: column; }
.stats { display: flex; justify-content: flex-end; gap: 8px; padding: 15px 30px 0 0; }
.rows, .timer { height: 24px; border: 1px solid #e0e0e0; border-radius: 8px; background: #f0f0f0; line-height: 23px; }
.rows { width: 67px; text-align: center; }
.timer { width: 129px; padding-left: 11px; display: flex; align-items: center; gap: 7px; border-color: #ace1c4; background: #eef8f2; color: #3f7d5a; font-family: "Liberation Mono", monospace; line-height: 24px; }
.legend { height: 20px; margin: 20px 0 0 869px; display: flex; align-items: center; font: 12px/20px "Noto Sans", sans-serif; color: #333; white-space: nowrap; }
.legend span { margin-left: 4px; letter-spacing: .07px; }
.legend .l1 { width: 136px; }
.legend .l2 { width: 137px; }
.legend b { width: 26px; height: 19px; border: 1px solid #666; border-radius: 10px; color: #666; font-weight: 400; line-height: 16px; text-align: center; }
.legend .inv { width: 28px; margin-left: 6px; }
.plot { margin-top: 6px; }
.grid { fill: none; stroke: #e0e6f1; }
.axis { fill: none; stroke: #6e7079; }
.plot text { font: 12px "Noto Sans", sans-serif; fill: #6e7079; }
.ylab { text-anchor: end; }
.xlab { text-anchor: middle; }
.series { fill: none; stroke-width: 2; stroke-linejoin: bevel; vector-effect: non-scaling-stroke; }
.db { stroke: #1fa8c9; }
.csv { stroke: #454e7c; }
.results { display: flex; align-items: center; gap: 32px; height: 45px; margin: 12px 15px 0 16px; padding-top: 2px; border-bottom: 1px solid #ebebeb; color: #333; }
.results svg { margin: -10px 6px 0 auto; }

.watermark { position: absolute; left: 1554px; top: 914px; color: #bdbdbd; font-family: "Open Sans", "Noto Sans", sans-serif; white-space: nowrap; }
.watermark p { font-size: 24px; line-height: 34px; }
.watermark small { display: block; font-size: 17.400px; line-height: 25px; }

/* taskbar */
.taskbar { flex: none; height: 59px; background: #1d1f2b; border-top: 1px solid #3a3d42; display: flex; align-items: center; color: #fff; font: 14px/20px "Open Sans", "Noto Sans", sans-serif; }
.weather { display: flex; width: 558px; padding-left: 24px; }
.wicon { position: relative; width: 40px; height: 40px; padding-top: 5px; }
.wicon b { position: absolute; left: 15px; top: -2px; width: 20px; height: 20px; border-radius: 50%; background: #ff99a4; color: #222; font-weight: 400; text-align: center; }
.wtext span, .wtext small { display: block; font-size: 14px; }
.wtext small { color: #c9cad0; letter-spacing: .15px; }
.tsearch { width: 275px; height: 40px; margin-left: 16px; padding-left: 14px; border: 1px solid #484a54; border-radius: 20px; background: #3e3f49; display: flex; align-items: center; gap: 12px; color: #d7d8dc; font-size: 16px; }
.apps { display: flex; gap: 5px; margin-left: 6px; }
.apps div { position: relative; width: 50px; height: 50px; padding: 10px; border-radius: 4px; }
.apps svg { width: 30px; height: 30px; }
.apps .focus { background: #2d303a; }
.apps .run::after { content: ""; position: absolute; left: 21px; bottom: 1px; width: 8px; height: 4px; border-radius: 2px; background: #9a9ba1; }
.apps .focus::after { left: 15px; width: 20px; background: #4cc2ff; }
.apps b { position: absolute; right: 5px; top: 4px; width: 19px; height: 19px; border-radius: 50%; background: #f4511e; color: #fff; font-weight: 400; font-size: 12px; line-height: 19px; text-align: center; }
.tray { display: flex; align-items: center; margin-left: auto; padding-right: 23px; }
.t-cloud { margin-left: 23px; }
.lang { width: 29px; margin-left: 24px; letter-spacing: .15px; }
.t-wifi { margin-left: 22px; }
.t-vol { margin-left: 10px; }
.t-bat { margin-left: 9px; }
.clock { width: 80px; margin-left: 17px; text-align: right; white-space: nowrap; }
.clock span { display: block; font-size: 14.300px; margin-left: -10px; }
```
